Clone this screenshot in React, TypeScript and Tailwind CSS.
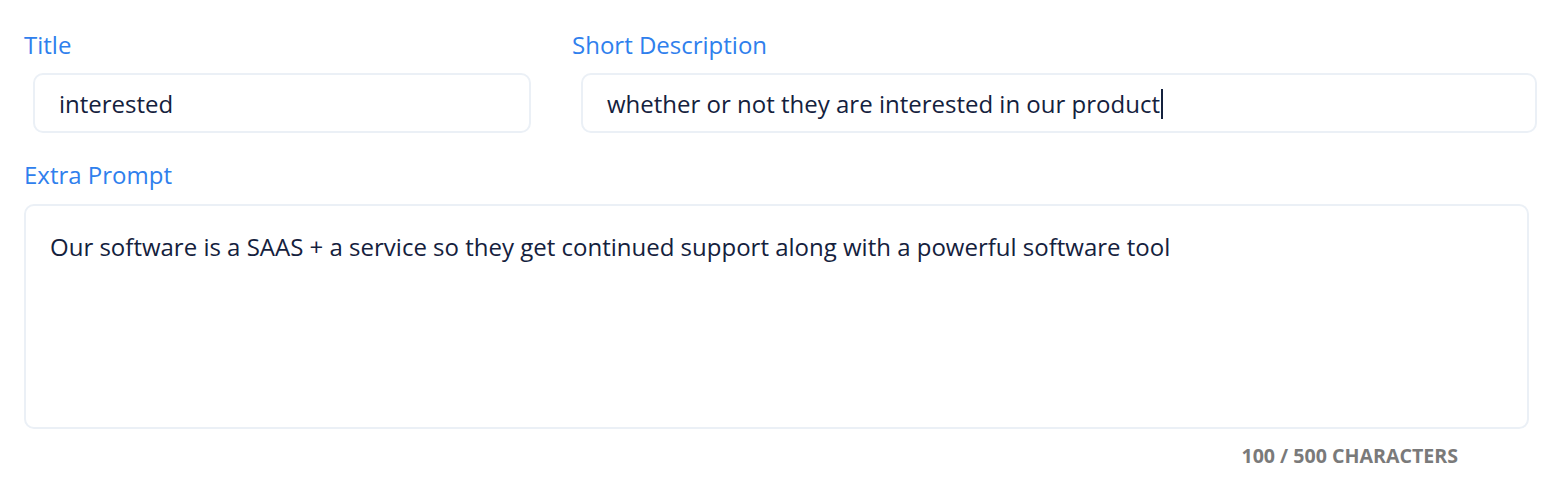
export default function App() {
  return (
    <div className="min-h-[500px] w-[1558px] bg-white text-[#14213d]" style={{ fontFamily: '"Open Sans", "Noto Sans", sans-serif' }}>
      <div className="pl-6 pt-[30px]">
        <div className="grid grid-cols-[516px_974px] gap-x-8">
          <div>
            <label className="block text-[24px] leading-[30px] text-[#2f80ed]">Title</label>
            <div className="mx-[9px] mt-[13px] flex h-[60px] items-center rounded-[10px] border-2 border-[#ebf0f6] px-6 pt-[2px] text-[24px]">
              interested
            </div>
          </div>
          <div>
            <label className="block text-[24px] leading-[30px] text-[#2f80ed]">Short Description</label>
            <div className="mx-[9px] mt-[13px] flex h-[60px] items-center rounded-[10px] border-2 border-[#ebf0f6] px-6 pt-[2px] text-[24px]">
              whether or not they are interested in our product
              <span className="ml-px inline-block h-[30px] w-[2px] bg-[#14213d]" />
            </div>
          </div>
        </div>
        <label className="mt-[27px] block text-[24px] leading-[30px] text-[#2f80ed]">Extra Prompt</label>
        <div className="mt-[14px] h-[225px] w-[1505px] rounded-[10px] border-2 border-[#ebf0f6] px-6 pt-[26px] text-[24px] leading-[30px]">
          Our software is a SAAS + a service so they get continued support along with a powerful software tool
        </div>
        <div className="mt-[12px] w-[1434px] text-right text-[19.6px] font-bold uppercase text-[#7a7a7a]">
          100 / 500 Characters
        </div>
      </div>
    </div>
  );
}
